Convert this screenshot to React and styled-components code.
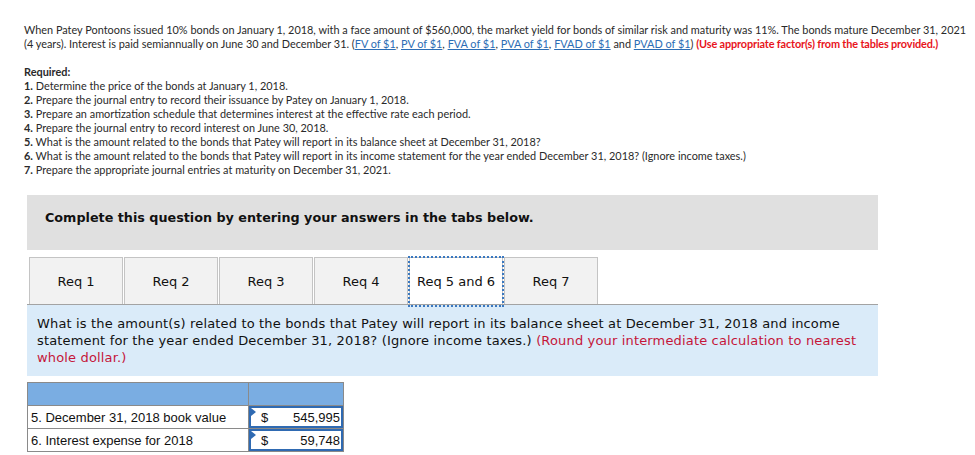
import React from "react";
import styled, { createGlobalStyle } from "styled-components";

const Global = createGlobalStyle`
  html, body { margin: 0; padding: 0; background: #fff; }
  body { font-family: "Lato", "Liberation Sans", sans-serif; color: #222; }
`;

const Page = styled.div`
  padding: 23px 0 0 0;
  width: 975px;
`;

const Intro = styled.div`
  margin-left: 24px;
  width: 950px;
  font-family: "Lato", "Liberation Sans", sans-serif;
  font-size: 10.9px;
  line-height: 14px;
  color: #2a2a2a;
`;

const Para = styled.p`
  margin: 0 0 14px 0;
`;

const Link = styled.a`
  color: #2c6db5;
  text-decoration: underline;
  cursor: pointer;
`;

const Warn = styled.span`
  color: #e8141b;
  font-weight: 700;
  letter-spacing: -0.15px;
`;

const Req = styled.div`
  font-weight: 700;
`;

const List = styled.ol`
  margin: 0;
  padding: 0;
  list-style: none;
`;

const Num = styled.b`
  font-weight: 700;
`;

const Panel = styled.div`
  margin: 18px 0 0 27px;
  width: 851px;
  font-family: "DejaVu Sans", Verdana, sans-serif;
`;

const Banner = styled.div`
  background: #e0e0e0;
  height: 55px;
  box-sizing: border-box;
  padding: 15px 0 0 18px;
  font-weight: 700;
  font-size: 12.75px;
  line-height: 16px;
  color: #111;
`;

const Tabs = styled.div`
  margin-top: 7px;
  display: flex;
  gap: 1px;
  padding-left: 2px;
  border-bottom: 1px solid #a3a3a3;
`;

const Tab = styled.div`
  width: 94px;
  height: 47px;
  box-sizing: border-box;
  border: 1px solid #c4c4c4;
  border-bottom: none;
  background: ${(p) => (p.$active ? "#fff" : "#f2f2f2")};
  display: flex;
  align-items: center;
  justify-content: center;
  font-size: 13px;
  color: #111;
  position: relative;
  ${(p) =>
    p.$active &&
    `
    &::after {
      content: "";
      position: absolute;
      left: -2px; right: -2px; top: -2px; bottom: -3px;
      border: 2px dotted #3a78c0;
    }
  `}
`;

const Prompt = styled.div`
  background: #daebf9;
  padding: 10px 10px 10px 10px;
  font-size: 13px;
  line-height: 17px;
  color: #111;
  letter-spacing: 0.16px;
`;

const Note = styled.span`
  color: #c5163a;
`;

const Table = styled.table`
  margin: 6px 0 0 27px;
  border-collapse: collapse;
  font-family: "Liberation Sans", Arial, sans-serif;
  font-size: 13px;
`;

const HeadCell = styled.td`
  background: #7aade2;
  border: 1px solid #8a8a8a;
  height: 22px;
  padding: 0;
`;

const LabelCell = styled.td`
  width: 217px;
  height: 22px;
  border: 1px solid #8a8a8a;
  padding: 0 0 0 3px;
  color: #111;
`;

const InputCell = styled.td`
  width: 94px;
  height: 22px;
  border: 1px solid #8a8a8a;
  padding: 0;
`;

const InputBox = styled.div`
  position: relative;
  height: 22px;
  box-sizing: border-box;
  border: 2px solid #2f6ab2;
  display: flex;
  align-items: center;
  justify-content: space-between;
  padding: 1px 1px 0 10px;
  color: #111;
  &::before {
    content: "";
    position: absolute;
    left: 0;
    top: 0;
    border-top: 4px solid transparent;
    border-bottom: 4px solid transparent;
    border-left: 5px solid #2f6ab2;
  }
`;

const requirements = [
  "Determine the price of the bonds at January 1, 2018.",
  "Prepare the journal entry to record their issuance by Patey on January 1, 2018.",
  "Prepare an amortization schedule that determines interest at the effective rate each period.",
  "Prepare the journal entry to record interest on June 30, 2018.",
  "What is the amount related to the bonds that Patey will report in its balance sheet at December 31, 2018?",
  "What is the amount related to the bonds that Patey will report in its income statement for the year ended December 31, 2018? (Ignore income taxes.)",
  "Prepare the appropriate journal entries at maturity on December 31, 2021.",
];

const tabs = ["Req 1", "Req 2", "Req 3", "Req 4", "Req 5 and 6", "Req 7"];

const rows = [
  { label: "5. December 31, 2018 book value", value: "545,995" },
  { label: "6. Interest expense for 2018", value: "59,748" },
];

export default function App() {
  return (
    <>
      <Global />
      <Page>
        <Intro>
          <Para>
            When Patey Pontoons issued 10% bonds on January 1, 2018, with a face amount of $560,000, the market yield for
            bonds of similar risk and maturity was 11%. The bonds mature December 31, 2021 (4 years). Interest is paid
            semiannually on June 30 and December 31. (<Link>FV of $1</Link>, <Link>PV of $1</Link>,{" "}
            <Link>FVA of $1</Link>, <Link>PVA of $1</Link>, <Link>FVAD of $1</Link> and <Link>PVAD of $1</Link>){" "}
            <Warn>(Use appropriate factor(s) from the tables provided.)</Warn>
          </Para>
          <Req>Required:</Req>
          <List>
            {requirements.map((r, i) => (
              <li key={i}>
                <Num>{i + 1}.</Num> {r}
              </li>
            ))}
          </List>
        </Intro>
        <Panel>
          <Banner>Complete this question by entering your answers in the tabs below.</Banner>
          <Tabs>
            {tabs.map((t) => (
              <Tab key={t} $active={t === "Req 5 and 6"}>
                {t}
              </Tab>
            ))}
          </Tabs>
          <Prompt>
            What is the amount(s) related to the bonds that Patey will report in its balance sheet at December 31, 2018 and
            income statement for the year ended December 31, 2018? (Ignore income taxes.){" "}
            <Note>(Round your intermediate calculation to nearest whole dollar.)</Note>
          </Prompt>
        </Panel>
        <Table>
          <tbody>
            <tr>
              <HeadCell />
              <HeadCell />
            </tr>
            {rows.map((r) => (
              <tr key={r.label}>
                <LabelCell>{r.label}</LabelCell>
                <InputCell>
                  <InputBox>
                    <span>$</span>
                    <span>{r.value}</span>
                  </InputBox>
                </InputCell>
              </tr>
            ))}
          </tbody>
        </Table>
      </Page>
    </>
  );
}
